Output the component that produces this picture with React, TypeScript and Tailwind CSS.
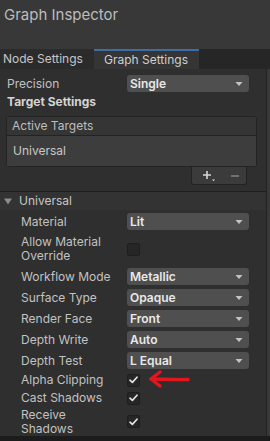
import React from "react";

const Arrow = () => (
  <svg width="8" height="6" viewBox="0 0 8 6" className="shrink-0">
    <path d="M0.5 1 L7.5 1 L4 5 Z" fill="#c4c4c4" />
  </svg>
);

const Dropdown = ({ value }: { value: string }) => (
  <div className="flex h-[17px] w-[122px] items-center justify-between rounded-[3px] bg-[#4f4f4f] pl-[3px] pr-[6px]">
    <span className="text-[12px] font-semibold leading-none text-[#e8e8e8]">{value}</span>
    <Arrow />
  </div>
);

const Check = ({ checked }: { checked: boolean }) => (
  <div className="flex h-[13px] w-[13px] items-center justify-center rounded-[2px] border border-[#1e1e1e] bg-[#262626]">
    {checked && (
      <svg width="9" height="8" viewBox="0 0 9 8">
        <path d="M1 4.2 L3.4 6.4 L8 1.2" fill="none" stroke="#e6e6e6" strokeWidth="1.6" strokeLinecap="round" strokeLinejoin="round" />
      </svg>
    )}
  </div>
);

const Row = ({
  label,
  h,
  children,
}: {
  label: React.ReactNode;
  h: string;
  children: React.ReactNode;
}) => (
  <div className={`flex items-center ${h}`}>
    <div className="w-[127px] shrink-0 pl-[21px] text-[12px] leading-[14px] text-[#c2c2c2]">{label}</div>
    <div className="flex items-center">{children}</div>
  </div>
);

export default function App() {
  return (
    <div
      className="relative h-[441px] w-[270px] overflow-hidden bg-[#2f2f2f]"
      style={{ fontFamily: "Inter, 'Noto Sans', sans-serif" }}
    >
      {/* Header */}
      <div className="h-[49px] bg-[#383838] pl-[4px] pt-[5px] text-[15px] leading-[20px] text-[#bcbcbc]">
        Graph Inspector
      </div>
      {/* Tabs */}
      <div className="flex h-[20px] bg-[#262626]">
        <div className="flex w-[94px] items-center bg-[#2b2b2b] pl-[3px] text-[12px] text-[#c6c6c6]">
          Node Settings
        </div>
        <div className="flex w-[105px] items-center border-t-2 border-[#3b6ea5] bg-[#353535] pl-[10px] text-[12px] text-[#d0d0d0]">
          Graph Settings
        </div>
      </div>
      {/* Body */}
      <div className="flex h-[367px]">
        <div className="flex w-[266px] flex-col">
          <div className="mt-[4px] flex h-[21px] items-center">
            <div className="w-[127px] shrink-0 pl-[7px] text-[12px] text-[#c2c2c2]">Precision</div>
            <Dropdown value="Single" />
          </div>
          <div className="flex h-[16px] items-center pl-[7px] text-[12px] font-bold text-[#d4d4d4]">
            Target Settings
          </div>
          {/* List */}
          <div className="ml-[6px] mt-[6px] w-[251px] rounded-[3px] border border-[#232323]">
            <div className="flex h-[19px] items-center border-b border-[#232323] bg-[#353535] pl-[5px] text-[12px] text-[#bdbdbd]">
              Active Targets
            </div>
            <div className="flex h-[30px] items-center bg-[#3d3d3d] pl-[6px] text-[12px] text-[#c8c8c8]">
              Universal
            </div>
          </div>
          <div className="ml-[191px] flex h-[18px] w-[56px] items-center gap-[15px] rounded-b-[3px] border border-t-0 border-[#232323] bg-[#3b3b3b] pl-[10px]">
            <svg width="14" height="12" viewBox="0 0 14 12">
              <path d="M5 1 V9 M1 5 H9" stroke="#d8d8d8" strokeWidth="1.6" />
              <path d="M10 9.5 L13 9.5 L11.5 11.2 Z" fill="#d8d8d8" />
            </svg>
            <svg width="8" height="4" viewBox="0 0 8 4">
              <path d="M0 2 H8" stroke="#8a8a8a" strokeWidth="1.4" />
            </svg>
          </div>
          {/* Foldout */}
          <div className="mt-[6px] flex h-[19px] items-center border-t border-[#1f1f1f] bg-[#333333] pl-[4px]">
            <svg width="8" height="7" viewBox="0 0 8 7">
              <path d="M0 0.5 L8 0.5 L4 6.5 Z" fill="#8c8c8c" />
            </svg>
            <span className="ml-[7px] text-[12px] text-[#c6c6c6]">Universal</span>
          </div>
          <div className="h-[1px]" />
          <Row label="Material" h="h-[21px]">
            <Dropdown value="Lit" />
          </Row>
          <Row label={<>Allow Material<br />Override</>} h="h-[34px]">
            <Check checked={false} />
          </Row>
          <Row label="Workflow Mode" h="h-[21px]">
            <Dropdown value="Metallic" />
          </Row>
          <Row label="Surface Type" h="h-[21px]">
            <Dropdown value="Opaque" />
          </Row>
          <Row label="Render Face" h="h-[21px]">
            <Dropdown value="Front" />
          </Row>
          <Row label="Depth Write" h="h-[21px]">
            <Dropdown value="Auto" />
          </Row>
          <Row label="Depth Test" h="h-[21px]">
            <Dropdown value="L Equal" />
          </Row>
          <Row label="Alpha Clipping" h="h-[18px]">
            <Check checked />
          </Row>
          <Row label="Cast Shadows" h="h-[18px]">
            <Check checked />
          </Row>
          <Row label={<>Receive<br />Shadows</>} h="h-[29px]">
            <Check checked />
          </Row>
        </div>
        <div className="w-[4px] border-l border-[#222222] bg-[#383838]" />
      </div>
      <div className="h-[5px] bg-[#1c1c1c]" />
      {/* Red arrow annotation */}
      <svg
        className="absolute left-[147px] top-[369px]"
        width="46"
        height="20"
        viewBox="0 0 46 20"
      >
        <path
          d="M4 10 C14 10 26 11 41 10.5"
          fill="none"
          stroke="#e3161d"
          strokeWidth="3.4"
          strokeLinecap="round"
        />
        <path
          d="M13 3 L4 10 L13 17"
          fill="none"
          stroke="#e3161d"
          strokeWidth="3.4"
          strokeLinecap="round"
          strokeLinejoin="round"
        />
      </svg>
    </div>
  );
}
